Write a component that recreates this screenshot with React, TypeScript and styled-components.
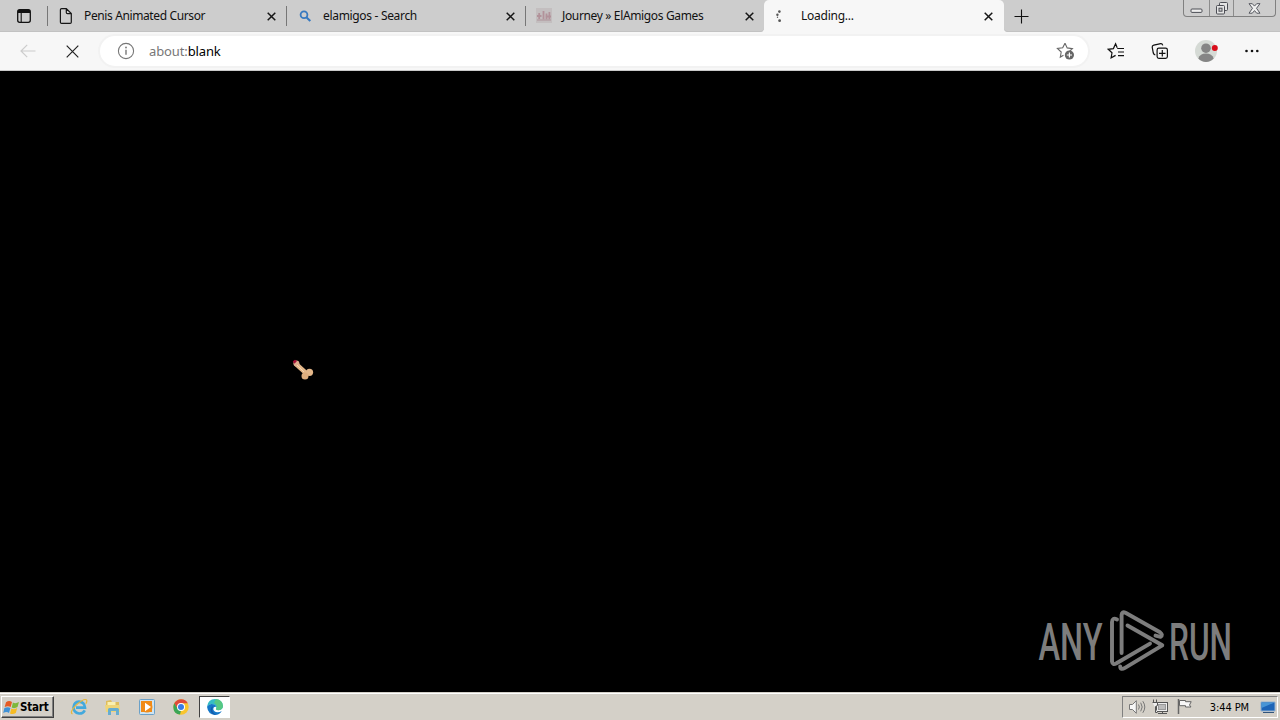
import React from 'react'
import styled, { createGlobalStyle } from 'styled-components'

type TabData = {
  title: string,
  icon: React.ReactNode,
  spacing: number,
  active?: boolean
}

const CloseIcon = () => (
  <svg width="9" height="9" viewBox="0 0 9 9">
    <path d="M.7.7l7.6 7.6M8.3.7L.7 8.3" stroke="#161616" strokeWidth="1.5" />
  </svg>
)

const PageIcon = () => (
  <svg width="16" height="18" viewBox="0 0 16 18" fill="none" stroke="#161616" strokeWidth="1.2">
    <path d="M3.6 1.6h4.7l5 5v8.6q0 1.2-1.2 1.2H3.6q-1.2 0-1.2-1.2V2.8q0-1.2 1.2-1.2zM8.3 1.6v3.8q0 1.2 1.2 1.2h3.8" />
  </svg>
)

const SearchIcon = () => (
  <svg width="16" height="16" viewBox="0 0 16 16" fill="none" stroke="#3679c0">
    <circle cx="7" cy="6.7" r="3.4" strokeWidth="1.8" />
    <path d="M9.6 9.4l3.7 3.6" strokeWidth="2.1" />
  </svg>
)

const SiteIcon = () => (
  <svg width="16" height="16" viewBox="0 0 16 16">
    <rect width="16" height="15" fill="#c3bebf" />
    <path d="M1 8h4.5M3.2 5v6M7.5 3v8.5M10.5 5.5v6M13.4 4v7.5M9.5 8.5h5.5" fill="none" stroke="#b2929a" strokeWidth="1.8" />
    <path d="M1 12h14" stroke="#b39fa4" strokeWidth="1.4" />
  </svg>
)

const SpinnerIcon = () => (
  <svg width="16" height="16" viewBox="0 0 16 16" fill="#555">
    <circle cx="4.4" cy="3.6" r="1.3" />
    <circle cx="2.4" cy="6.8" r="1.2" />
    <circle cx="2.5" cy="9.3" r=".7" />
    <circle cx="4.6" cy="12.7" r="1.4" />
  </svg>
)

const tabs: TabData[] = [
  { title: 'Penis Animated Cursor', icon: <PageIcon />, spacing: -0.38 },
  { title: 'elamigos - Search', icon: <SearchIcon />, spacing: -0.32 },
  { title: 'Journey » ElAmigos Games', icon: <SiteIcon />, spacing: -0.35 },
  { title: 'Loading...', icon: <SpinnerIcon />, spacing: -0.25, active: true },
]

const TabStrip = () => (
  <Strip>
    <TabActions>
      <svg width="16" height="16" viewBox="0 0 16 16">
        <rect x="1.7" y="1.7" width="12.6" height="12.6" rx="2" fill="none" stroke="#111" strokeWidth="1.3" />
        <path d="M2 2h12v3H2z" fill="#111" />
        <path d="M5.2 5v9" stroke="#111" strokeWidth="1.1" />
      </svg>
    </TabActions>
    {tabs.map((tab) => (
      <Tab key={tab.title} $active={tab.active}>
        {tab.icon}
        <TabTitle $spacing={tab.spacing}>{tab.title}</TabTitle>
        <CloseIcon />
      </Tab>
    ))}
    <StripEnd>
      <NewTab>
        <svg width="15" height="15" viewBox="0 0 15 15">
          <path d="M7.5 .5v14M.5 7.5h14" stroke="#111" strokeWidth="1.1" />
        </svg>
      </NewTab>
      <WindowControls>
        <WindowButton $width={25}>
          <svg width="13" height="6" viewBox="0 0 13 6">
            <rect x="1" y="1" width="11" height="3.4" rx="1" fill="#eee" stroke="#4c4e55" />
          </svg>
        </WindowButton>
        <WindowButton $width={25}>
          <svg width="14" height="13" viewBox="0 0 14 13" fill="#e4e4e4" stroke="#4c4e55">
            <rect x="4.5" y=".5" width="8" height="8" rx="1" />
            <rect x="1.5" y="3.5" width="8" height="8.5" rx="1" />
            <rect x="4" y="6.2" width="3" height="3" fill="#ccc" />
          </svg>
        </WindowButton>
        <WindowButton $width={42}>
          <svg width="13" height="11" viewBox="0 0 13 11">
            <path d="M1 .7h3.3l2.2 2.4L8.7.7H12L8.5 5.3l3.5 4.9H8.7L6.5 7.6l-2.2 2.6H1l3.5-4.9z" fill="#f0f0f0" stroke="#55575f" />
          </svg>
        </WindowButton>
      </WindowControls>
    </StripEnd>
  </Strip>
)

const Toolbar = () => (
  <Bar>
    <ToolButton $width={56}>
      <svg width="16" height="14" viewBox="0 0 16 14" fill="none" stroke="#ccc" strokeWidth="1.2">
        <path d="M15.5 7H1M7.2 .8L1 7l6.2 6.2" />
      </svg>
    </ToolButton>
    <ToolButton $width={32}>
      <svg width="13" height="13" viewBox="0 0 13 13">
        <path d="M.7.7l11.6 11.6M12.3.7L.7 12.3" stroke="#222" strokeWidth="1.2" />
      </svg>
    </ToolButton>
    <Address>
      <svg width="18" height="18" viewBox="0 0 18 18">
        <circle cx="9" cy="9" r="7.6" fill="none" stroke="#777" strokeWidth="1.1" />
        <path d="M9 7.8v5" stroke="#777" strokeWidth="1.4" />
        <circle cx="9" cy="5.5" r=".9" fill="#777" />
      </svg>
      <Url><span>about:</span>blank</Url>
      <svg width="20" height="20" viewBox="0 0 20 20">
        <path d="M9 2.2l2.2 4.7 5.2.7-3.8 3.6M7.5 14.3l-3.2 1.8.9-5.1-3.8-3.6 5.3-.7L9 2.2" fill="none" stroke="#666" strokeWidth="1.1" />
        <circle cx="13.4" cy="14" r="4.6" fill="#666" />
        <path d="M13.4 11.4v5.2M10.8 14H16" stroke="#fff" strokeWidth="1.2" />
      </svg>
    </Address>
    <Tools>
      <svg width="18" height="18" viewBox="0 0 18 18" fill="none" stroke="#111" strokeWidth="1.2">
        <path d="M10.2 5.8L8.6 1.8 6.4 6.6l-5.1.7L5 10.8l-.9 5 4.5-2.4M10.2 6.5H17M11 10h6M11 13.6h6" />
      </svg>
      <svg width="18" height="18" viewBox="0 0 18 18" fill="none" stroke="#111" strokeWidth="1.2">
        <path d="M4.3 13Q2.7 12.5 2.3 11L1.2 5.2Q1 3.5 2.8 3.1L9.7 1.7Q11.2 1.5 11.8 3.4" />
        <rect x="6.1" y="6.1" width="10.3" height="10.3" rx="1.8" />
        <path d="M11.3 8v6.5M8 11.3h6.5" />
      </svg>
      <svg width="24" height="24" viewBox="0 0 24 24">
        <circle cx="12" cy="12" r="11" fill="#d5dad5" />
        <circle cx="12" cy="9.2" r="4.8" fill="#858585" />
        <path d="M4.3 19.6q1.7-5 7.7-5t7.7 5Q16.5 23 12 23t-7.7-3.4z" fill="#858585" />
        <circle cx="20.8" cy="9" r="3" fill="#d90e1b" />
      </svg>
      <svg width="16" height="4" viewBox="0 0 16 4" fill="#111">
        <circle cx="2.5" cy="2" r="1.3" />
        <circle cx="8" cy="2" r="1.3" />
        <circle cx="13.3" cy="2" r="1.3" />
      </svg>
    </Tools>
  </Bar>
)

const Watermark = () => (
  <WatermarkBox>
    <svg width="210" height="80" viewBox="0 0 210 80">
      <g fill="#7d7d7d" fontFamily="Roboto, sans-serif" fontSize="52" fontWeight="500">
        <text x="2.5" y="54.5" textLength="64" lengthAdjust="spacingAndGlyphs">ANY</text>
        <text x="133" y="54.5" textLength="63" lengthAdjust="spacingAndGlyphs">RUN</text>
      </g>
      <g fill="none" stroke="#7d7d7d" strokeWidth="3.9" strokeLinecap="round" strokeLinejoin="round">
        <path d="M85.6 48V10Q86 6 89.5 7.8L124 27.3Q127.5 30 124.5 31.8L119.5 30.6" />
        <path d="M91.5 20.5L126.3 40.3L89 62.8Q84.5 65.5 84.2 61.5" />
        <path d="M81 14.5Q76.3 12 76 17V56.5Q76.5 60.5 80.5 58.3L114 38.6" />
      </g>
    </svg>
  </WatermarkBox>
)

const Taskbar = () => (
  <TaskbarBox>
    <StartButton>
      <svg width="17" height="17" viewBox="0 0 17 17">
        <path d="M3 3.2Q6 1 9 3L7.7 8Q5 6.3 1.7 8z" fill="#e65b24" />
        <path d="M9.9 3.5Q12.5 5 16 3L14.5 8q-3 2-5.8.5z" fill="#7eb83b" />
        <path d="M1.4 9Q5 7.3 7.4 9L6 14Q3.7 12.2.2 14z" fill="#3f91d6" />
        <path d="M8.4 9.5q3 1.5 5.8-.4L12.8 14q-3 2-5.8.4z" fill="#f6bb22" />
      </svg>
      Start
    </StartButton>
    <Launchers>
      <Launcher>
        <svg width="18" height="18" viewBox="0 0 18 18" fill="none">
          <path d="M14.8 12.3q-2 3.5-5.8 3.2-5.5-.8-5.5-6.2Q4 4 9 3.6q5.5.3 6 6H6" stroke="#43a9dd" strokeWidth="2.6" />
          <path d="M2.5 16Q-.8 14.5 6 7.2 13.8.3 16.3 1.8q1.3 1-.5 4" stroke="#e7b73b" strokeWidth="1.2" />
        </svg>
      </Launcher>
      <Launcher>
        <svg width="18" height="18" viewBox="0 0 18 18">
          <path d="M2 3l5-1 1 2h7v9H2z" fill="#dfbd5c" />
          <path d="M3.5 4h8v7h-8z" fill="#faf0b0" />
          <path d="M1 7h14.5l.5 7H2z" fill="#efd578" />
          <path d="M4 17v-5.5Q4 10 5.5 10h8q1.5 0 1.5 1.5V17h-3v-4H7v4z" fill="#67add0" />
        </svg>
      </Launcher>
      <Launcher>
        <svg width="18" height="18" viewBox="0 0 18 18">
          <rect x="1.5" y="1.5" width="15" height="15" rx="1" fill="#cfe4f2" stroke="#6ba1c8" />
          <rect x="3" y="3" width="11" height="11" fill="#f18b17" />
          <circle cx="9" cy="9" r="5.5" fill="#f18b17" />
          <path d="M7 4.7l6 4.3-6 4.3z" fill="#fff" />
        </svg>
      </Launcher>
      <Launcher>
        <svg width="18" height="18" viewBox="0 0 18 18">
          <circle cx="9" cy="9" r="7.7" fill="#f9c52d" />
          <path d="M9 9L6 16Q1.5 14.5 1.3 9 1.3 6.8 2.5 5L5.5 10.5 9 12.5 8 16.6Q2 16 1.4 10z" fill="#3ba657" />
          <path d="M2.3 5.1Q5 1.3 9 1.3q4.8 0 6.8 4H9L5.5 10.6z" fill="#df4a3b" />
          <circle cx="9" cy="9" r="4" fill="#fff" />
          <circle cx="9" cy="9" r="3" fill="#397ce6" />
        </svg>
      </Launcher>
      <ActiveLauncher>
        <svg width="18" height="18" viewBox="0 0 18 18">
          <path d="M1 8.7Q2 1 9 1q7.5.3 8 7 0 4-4.8 4.3-2.6-.1-2-1.7Q11 7 7.4 6.4 3 6 1 8.7z" fill="#36bdc4" />
          <path d="M10 1.1q6.6.8 7 7-.3 4-4.8 4.2-2.6-.1-2-1.7 1.6-4-2.2-5.6z" fill="#57c883" />
          <path d="M1 8.7Q3 5.3 7.4 6.3q2.8.6 3.2 2.5Q7.5 8 7.2 11q.5 3 4.3 3.2 2.4 0 4.3-1.2Q13.5 17 9 17 2 16.4 1 8.7z" fill="#1477c8" />
          <path d="M7.2 8q-3 5.5 2.8 9Q5 16.3 4.6 12 4.8 9 7.2 8z" fill="#1559a8" />
        </svg>
      </ActiveLauncher>
    </Launchers>
    <Tray>
      <svg width="18" height="18" viewBox="0 0 18 18" fill="none" stroke="#777">
        <path d="M1.5 6.5h3L8.3 2.7v12.6L4.5 11.5h-3z" fill="#f7f7f7" />
        <path d="M10.5 6.5q1.7 2.5 0 5M12.7 4.7q3 4.3 0 8.6M14.8 3.2q4 5.8 0 11.6" />
      </svg>
      <svg width="18" height="18" viewBox="0 0 18 18" fill="#eee" stroke="#555">
        <rect x="4.5" y="4.5" width="11" height="9" />
        <rect x="6.5" y="6.5" width="7" height="5" fill="#bbb" stroke="#999" />
        <path d="M6 15.5h9M10.5 14v1M1.5 1.5v3M4.5 1.5v3M.5 4.5h5v3l-2 1v6h2" />
      </svg>
      <svg width="18" height="18" viewBox="0 0 18 18" fill="#f7f7f7" stroke="#666">
        <path d="M2.5 1v15" strokeWidth="1.5" />
        <path d="M3.5 2.5h6v1.2h5.7L13.5 7l1.5 2H9.5V7.7h-6z" />
      </svg>
      <Clock>3:44 PM</Clock>
      <svg width="16" height="16" viewBox="0 0 16 16">
        <path d="M1 3h14v9H1z" fill="#1d64b7" stroke="#93b0cf" />
        <path d="M1.5 3.5h13L1.5 9z" fill="#4895d6" />
        <path d="M3 13.5h11" stroke="#31547b" />
      </svg>
    </Tray>
  </TaskbarBox>
)

const App = () => (
  <Screen>
    <GlobalStyle />
    <TabStrip />
    <Toolbar />
    <Page>
      <Cursor>
        <svg width="22" height="22" viewBox="0 0 22 22">
          <path d="M4 5l11 10" stroke="#e4b789" strokeWidth="4.6" />
          <circle cx="4.4" cy="4.4" r="3" fill="#dfae8e" />
          <path d="M.8 2.2L3 .8 5 2 2.5 4.8z" fill="#a50f38" />
          <circle cx="17.5" cy="13.3" r="3.6" fill="#e4b789" />
          <circle cx="13" cy="17" r="3.5" fill="#dfae7e" />
          <path d="M5 6l7 7" stroke="#f6d6b1" />
        </svg>
      </Cursor>
      <Watermark />
    </Page>
    <Taskbar />
  </Screen>
)

const GlobalStyle = createGlobalStyle`
  body {
    margin: 0;
    overflow: hidden;
  }
  svg {
    display: block;
    flex: none;
  }
`

const Screen = styled.div`
  display: flex;
  flex-direction: column;
  width: 1280px;
  height: 720px;
  background: #000;
  font-family: "Noto Sans", "Open Sans", sans-serif;
  font-size: 12px;
  color: #111;
`

/* lower half takes the toolbar colour so the corners beside the active tab flow into it */
const Strip = styled.div`
  display: flex;
  height: 32px;
  background: linear-gradient(#cdcdcd 16px, #f7f7f7 16px);
`

const TabActions = styled.div`
  display: flex;
  align-items: center;
  justify-content: center;
  box-sizing: border-box;
  width: 48px;
  background: linear-gradient(#777, #777) right 6px / 1px 20px no-repeat #cdcdcd;
  box-shadow: inset 0 -1px #c2c2c2;
`

const Tab = styled.div<{ $active?: boolean }>`
  display: flex;
  align-items: center;
  box-sizing: border-box;
  width: ${(p) => (p.$active ? 240 : 239)}px;
  padding: 0 11px 0 ${(p) => (p.$active ? 11 : 10)}px;
  border-radius: ${(p) => (p.$active ? '5px 5px 0 0' : '0')};
  background: ${(p) => (p.$active ? '#f7f7f7' : 'linear-gradient(#777, #777) right 6px / 1px 20px no-repeat #cdcdcd')};
  box-shadow: ${(p) => (p.$active ? 'none' : 'inset 0 -1px #c2c2c2')};
  &:nth-child(4) {
    width: 238px;
    padding-right: 10px;
    border-radius: 0 0 4px 0;
    background: #cdcdcd;
  }
`

const TabTitle = styled.span<{ $spacing: number }>`
  flex: 1;
  margin-left: 10px;
  line-height: 18px;
  letter-spacing: ${(p) => p.$spacing}px;
  white-space: nowrap;
`

const StripEnd = styled.div`
  display: flex;
  flex: 1;
  border-radius: 0 0 0 4px;
  background: #cdcdcd;
  box-shadow: inset 0 -1px #c2c2c2;
`

const NewTab = styled.div`
  display: flex;
  align-items: center;
  justify-content: center;
  width: 35px;
`

const WindowControls = styled.div`
  display: flex;
  box-sizing: border-box;
  width: 93px;
  height: 17px;
  margin: 0 4px 0 auto;
  border: 1px solid #808080;
  border-top: none;
  border-radius: 0 0 4px 4px;
`

const WindowButton = styled.div<{ $width: number }>`
  display: flex;
  align-items: center;
  justify-content: center;
  box-sizing: border-box;
  width: ${(p) => p.$width}px;
  & + & {
    border-left: 1px solid #8c8c8c;
  }
  &:first-child {
    padding-top: 5px;
  }
`

const Bar = styled.div`
  display: flex;
  align-items: center;
  box-sizing: border-box;
  height: 39px;
  border-bottom: 1px solid #c9c9c9;
  background: #f7f7f7;
`

const ToolButton = styled.div<{ $width: number }>`
  display: flex;
  justify-content: center;
  width: ${(p) => p.$width}px;
`

const Address = styled.div`
  display: flex;
  align-items: center;
  box-sizing: border-box;
  width: 988px;
  height: 30px;
  margin-left: 12px;
  padding: 0 12px 0 17px;
  border-radius: 15px;
  background: #fff;
  box-shadow: 0 0 0 2px #f2f2f2;
`

const Url = styled.div`
  flex: 1;
  margin-left: 14px;
  font-size: 13px;
  line-height: 18px;
  letter-spacing: -0.12px;
  color: #000;
  span {
    color: #777;
  }
`

const Tools = styled.div`
  display: grid;
  grid-template-columns: 44px 44px 48px 44px;
  align-items: center;
  justify-items: center;
  margin-left: 6px;
`

const Page = styled.div`
  position: relative;
  height: 621px;
  background: #000;
`

const Cursor = styled.div`
  position: absolute;
  left: 292px;
  top: 288px;
`

const WatermarkBox = styled.div`
  position: absolute;
  left: 1036px;
  top: 534px;
`

const TaskbarBox = styled.div`
  display: flex;
  align-items: center;
  box-sizing: border-box;
  height: 28px;
  padding: 1px 2px 0 1px;
  border-top: 1px solid #d4d0c8;
  background: #d4d0c8;
  box-shadow: inset 0 1px #fff;
`

const StartButton = styled.div`
  display: flex;
  align-items: center;
  box-sizing: border-box;
  width: 53px;
  height: 22px;
  padding-left: 1px;
  border: 1px solid;
  border-color: #fff #404040 #404040 #fff;
  box-shadow: inset -1px -1px #808080;
  font-family: "DejaVu Sans Condensed", "DejaVu Sans", sans-serif;
  font-size: 11.5px;
  font-weight: bold;
  letter-spacing: -0.2px;
  color: #000;
`

const Launchers = styled.div`
  display: flex;
  align-items: center;
  margin-left: 8px;
`

const Launcher = styled.div`
  display: flex;
  justify-content: center;
  width: 34px;
`

const ActiveLauncher = styled.div`
  display: flex;
  align-items: center;
  justify-content: center;
  box-sizing: border-box;
  width: 31px;
  height: 22px;
  margin-left: 1px;
  border: 1px solid;
  border-color: #404040 #fff #fff #404040;
  background: #fff;
`

const Tray = styled.div`
  display: flex;
  align-items: center;
  box-sizing: border-box;
  width: 156px;
  height: 22px;
  margin-left: auto;
  padding: 0 1px 0 5px;
  gap: 6px;
  border: 1px solid;
  border-color: #808080 #fff #fff #808080;
`

const Clock = styled.span`
  flex: 1;
  text-align: right;
  margin-right: 5px;
  font-family: "DejaVu Sans Condensed", "DejaVu Sans", sans-serif;
  font-size: 11px;
  letter-spacing: -0.1px;
  white-space: nowrap;
  color: #000;
`

export default App
